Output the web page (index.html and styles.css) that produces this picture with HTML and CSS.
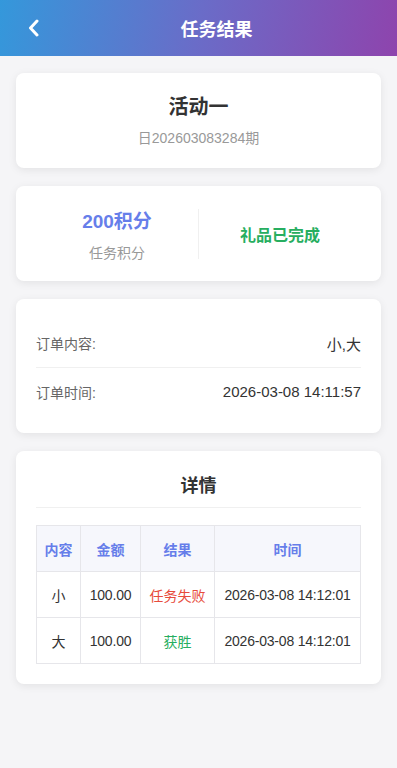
FILE: index.html
```html
<!DOCTYPE html>
<html lang="zh-CN">
<head>
<meta charset="utf-8">
<title>任务结果</title>
<link rel="stylesheet" href="styles.css">
</head>
<body>
<header class="topbar">
  <button class="back" aria-label="返回">
    <svg width="14" height="18" viewBox="0 0 14 18"><path d="M10 2 L3.5 9 L10 16" fill="none" stroke="#fff" stroke-width="3" stroke-linecap="round" stroke-linejoin="round"/></svg>
  </button>
  <h1 class="title">任务结果</h1>
</header>

<main class="content">
  <section class="card card-head">
    <div class="act-name">活动一</div>
    <div class="act-period">日202603083284期</div>
  </section>

  <section class="card card-stats">
    <div class="stat">
      <div class="stat-value">200积分</div>
      <div class="stat-label">任务积分</div>
    </div>
    <div class="stat-divider"></div>
    <div class="stat">
      <div class="stat-status">礼品已完成</div>
    </div>
  </section>

  <section class="card card-info">
    <div class="info-row">
      <span class="info-label">订单内容:</span>
      <span class="info-value">小,大</span>
    </div>
    <div class="info-row">
      <span class="info-label">订单时间:</span>
      <span class="info-value">2026-03-08 14:11:57</span>
    </div>
  </section>

  <section class="card card-detail">
    <h2 class="detail-title">详情</h2>
    <table class="detail-table">
      <colgroup>
        <col class="c1"><col class="c2"><col class="c3"><col class="c4">
      </colgroup>
      <thead>
        <tr><th>内容</th><th>金额</th><th>结果</th><th>时间</th></tr>
      </thead>
      <tbody>
        <tr><td>小</td><td class="num">100.00</td><td class="lose">任务失败</td><td class="num">2026-03-08 14:12:01</td></tr>
        <tr><td>大</td><td class="num">100.00</td><td class="win">获胜</td><td class="num">2026-03-08 14:12:01</td></tr>
      </tbody>
    </table>
  </section>
</main>
</body>
</html>
```

FILE: styles.css
```css
* { box-sizing: border-box; }
html, body { margin: 0; padding: 0; }
body {
  background: #f5f5f7;
  font-family: "Liberation Sans", "Noto Sans CJK SC", sans-serif;
  color: #333;
  min-height: 768px;
}
.topbar {
  height: 56px;
  display: flex;
  align-items: center;
  padding: 0 16px;
  background: linear-gradient(100deg, #3498db 0%, #6a6cc8 50%, #8e44ad 100%);
}
.back {
  width: 36px;
  height: 36px;
  padding: 0;
  border: 0;
  background: transparent;
  display: flex;
  align-items: center;
  justify-content: center;
}
.title {
  flex: 1;
  margin: 0;
  text-align: center;
  color: #fff;
  font-size: 18px;
  font-weight: bold;
}
.content {
  padding: 17px 16px 40px;
  display: flex;
  flex-direction: column;
  gap: 18px;
}
.card {
  background: #fff;
  border-radius: 8px;
  box-shadow: 0 2px 8px rgba(0, 0, 0, 0.08);
}
.card-head {
  height: 95px;
  display: flex;
  flex-direction: column;
  align-items: center;
  padding-top: 22px;
}
.act-name {
  font-size: 20px;
  font-weight: bold;
  color: #333;
  line-height: 24px;
}
.act-period {
  margin-top: 10px;
  font-size: 14px;
  color: #999;
  line-height: 18px;
}
.card-stats {
  height: 95px;
  display: flex;
  align-items: center;
  padding: 0 20px;
}
.stat {
  flex: 1;
  display: flex;
  flex-direction: column;
  align-items: center;
}
.stat-value {
  font-size: 19px;
  font-weight: bold;
  color: #667eea;
  line-height: 24px;
  margin-top: 5px;
}
.stat-label {
  margin-top: 10px;
  font-size: 14px;
  color: #999;
  line-height: 18px;
}
.stat-divider {
  width: 1px;
  height: 50px;
  background: #f0f0f0;
}
.stat-status {
  font-size: 16px;
  font-weight: bold;
  color: #27ae60;
}
.card-info {
  padding: 21px 20px 19px;
}
.info-row {
  height: 47px;
  display: flex;
  align-items: center;
  justify-content: space-between;
  padding-bottom: 1px;
}
.info-row + .info-row {
  border-top: 1px solid #f0f0f0;
  padding-top: 1px;
  padding-bottom: 0;
}
.info-label {
  font-size: 14px;
  color: #666;
}
.info-value {
  font-size: 15px;
  color: #333;
}
.card-detail {
  padding: 20px;
}
.detail-title {
  margin: 0;
  text-align: center;
  font-size: 18px;
  font-weight: bold;
  color: #333;
  line-height: 28px;
  padding-top: 1px;
  padding-bottom: 7px;
  border-bottom: 1px solid #f0f0f0;
}
.detail-table {
  margin-top: 17px;
  width: 100%;
  border-collapse: collapse;
  table-layout: fixed;
  text-align: center;
}
.c1 { width: 44px; }
.c2 { width: 60px; }
.c3 { width: 74px; }
.c4 { width: auto; }
.detail-table th,
.detail-table td {
  border: 1px solid #e6e6ea;
  height: 46px;
  padding: 0;
  white-space: nowrap;
}
.detail-table th {
  background: #f6f7fc;
  color: #667eea;
  font-size: 14px;
  font-weight: bold;
}
.detail-table td {
  font-size: 14px;
  color: #333;
}
.detail-table td.num { letter-spacing: -0.2px; }
.detail-table td.lose { color: #e74c3c; }
.detail-table td.win { color: #27ae60; }
```
